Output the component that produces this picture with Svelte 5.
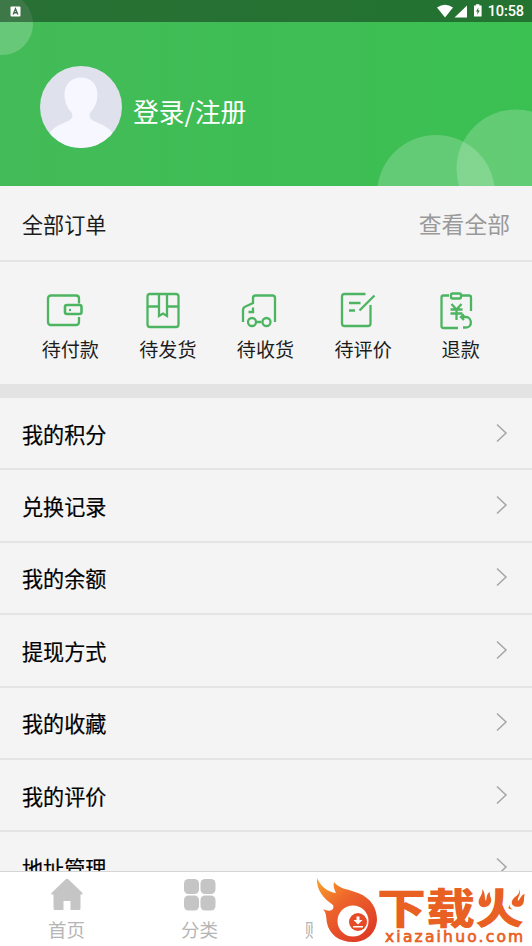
<script>
    const orders = [
        { icon: "wallet", name: "待付款" },
        { icon: "box", name: "待发货" },
        { icon: "truck", name: "待收货" },
        { icon: "review", name: "待评价" },
        { icon: "refund", name: "退款" },
    ]
    const menu = ["我的积分", "兑换记录", "我的余额", "提现方式", "我的收藏", "我的评价", "地址管理"]
    const tabs = [
        { icon: "home", name: "首页" },
        { icon: "grid", name: "分类" },
        { icon: "", name: "购物车" },
        { icon: "", name: "" },
    ]
</script>

<div class="screen">
    <header>
        <svg class="bubbles" viewBox="0 0 532 186">
            <circle cx="2" cy="24" r="31" />
            <circle cx="436" cy="194" r="59" />
            <circle cx="516" cy="169" r="59.5" />
        </svg>
        <div class="status">
            <svg width="11" height="11" viewBox="0 0 11 11">
                <rect x=".5" y=".5" width="10" height="10" rx="1" fill="#fff" />
                <path d="M3.2 8.5 5.5 2.8 7.8 8.5M4.1 6.8H6.9" fill="none" stroke="#426b48" stroke-width="1.4" />
            </svg>
            <div class="signals">
                <svg width="46" height="14" viewBox="0 0 46 14" fill="#fff">
                    <path d="M1 3.6Q9-2 17 3.6L9 13.4Z" />
                    <path d="M31 1.5V13.4H18.5Z" />
                    <path d="M38 1.6H40V.3H43.4V1.6H45.6V12.6H38Z" />
                    <path d="M42.5 3.4 40 7.5H41.6L41 10.8 43.8 6.5H42.1Z" fill="#25702f" />
                </svg>
                <span>10:58</span>
            </div>
        </div>
        <div class="user">
            <svg width="82" height="82" viewBox="0 0 82 82">
                <defs><clipPath id="face"><circle cx="41" cy="41" r="41" /></clipPath></defs>
                <g clip-path="url(#face)">
                    <rect width="82" height="82" fill="#dfe1ed" />
                    <path d="M41 11.5C31 11.5 24.5 18.5 24.5 28.5C24.5 37 28 42.5 32 47C33.5 52 31 54 26 56C18 59 12 62.5 8 69V84H74V69C70 62.5 64 59 56 56C51 54 48.5 52 50 47C54 42.5 57.5 37 57.5 28.5C57.5 18.5 51 11.5 41 11.5Z" fill="#f6f7ff" />
                </g>
            </svg>
            <span>登录/注册</span>
        </div>
    </header>

    <div class="all">
        <span>全部订单</span>
        <span class="more">查看全部</span>
    </div>

    <div class="orders">
        {#each orders as order}
            <div class="order">
                <svg width="40" height="40" viewBox="0 0 40 40">
                    {#if order.icon == "wallet"}
                        <path d="M33 13.5V8.5Q33 5.5 30 5.5H5Q2 5.5 2 8.5V32Q2 35 5 35H30Q33 35 33 32V27" />
                        <rect x="19" y="15" width="16.5" height="9" rx="2" stroke-width="2.6" />
                        <circle cx="24" cy="20" r=".6" stroke-width="1.2" />
                    {:else if order.icon == "box"}
                        <rect x="3.5" y="4" width="31" height="33" rx="2.5" />
                        <path d="M4 16.5H15M23 16.5H34M15 4V26L19 23.5 23 26V4" />
                    {:else if order.icon == "truck"}
                        <path d="M2 32V20Q2 17.5 4.5 16.5L12 13V8Q12 5.5 14.5 5.5H31.5Q34 5.5 34 8V32M12 17.5V22H7.5M15.5 32H20.5" />
                        <circle cx="11" cy="32" r="4" />
                        <circle cx="25.5" cy="32" r="4" />
                    {:else if order.icon == "review"}
                        <path d="M26.5 4H5.5Q3 4 3 6.5V33.5Q3 36 5.5 36H29Q31.5 36 31.5 33.5V15M10 13H21.5M10 20.5H16M20.5 20.5 35.5 5.5" />
                    {:else}
                        <path d="M12 5.5H6.5Q4.5 5.5 4.5 7.5V36Q4.5 38 6.5 38H21M25 5.5H32Q34 5.5 34 7.500V21" />
                        <rect x="14" y="3.5" width="10" height="5" rx="1.5" />
                        <path d="M14.5 14 19.5 19.5 24.5 14M13.5 19.5H25.5M13.5 23.5H25.5M19.5 19.5V30M24 27H29C35 27 36 37.5 29 37.5H26M27 24.5 24 27 27 30" />
                    {/if}
                </svg>
                <span>{order.name}</span>
            </div>
        {/each}
    </div>

    <div class="menu">
        {#each menu as item}
            <div class="row">
                <span>{item}</span>
                <svg width="12" height="20" viewBox="0 0 12 20">
                    <path d="M1 1.5 10 10 1 18.5" fill="none" stroke="#a5a5a5" stroke-width="1.5" />
                </svg>
            </div>
        {/each}
    </div>

    <nav>
        {#each tabs as tab}
            <div class="tab">
                <svg width="34" height="34" viewBox="0 0 34 34">
                    {#if tab.icon == "home"}
                        <path d="M15.5 1.4Q17 .2 18.500 1.4L32.5 15Q33 16.5 31.5 16.5H30.5V30.5Q30.5 32 29 32H20.5V23H13.5V32H5Q3.500 32 3.5 30.5V16.5H2Q.5 16.5 1.5 15Z" />
                    {:else if tab.icon == "grid"}
                        <rect x="1" y="1" width="15" height="15" rx="4.5" />
                        <rect x="17.5" y="1" width="15" height="15" rx="4.5" />
                        <rect x="1" y="17.5" width="15" height="15" rx="4.5" />
                        <rect x="17.5" y="17.5" width="15" height="15" rx="4.5" />
                    {/if}
                </svg>
                <span>{tab.name}</span>
            </div>
        {/each}
    </nav>

    <div class="brand">
        <svg class="flame" width="64" height="67" viewBox="0 0 64 67">
            <defs>
                <linearGradient id="fire" x1="0" y1="0" x2=".7" y2="1">
                    <stop offset="0" stop-color="#f9a32b" />
                    <stop offset=".45" stop-color="#ed632b" />
                    <stop offset="1" stop-color="#df3c25" />
                </linearGradient>
            </defs>
            <path d="M2 0C6 9 13 14 21 15C19 11 18 8 19 4C24 11 33 11 43 15C56 20 62 30 62 42C61 56 51 64 38 64C24 64 14 56 12 45C11 40 12 36 8 31C14 34 20 33 18 27C9 21 1 12 2 0Z" fill="url(#fire)" />
            <circle cx="38" cy="43" r="15.5" fill="#fff" />
            <circle cx="43" cy="44" r="9" fill="#e64b28" />
            <path d="M41.5 38.500H44.5V42H47.5L43 46.5 38.5 42H41.5ZM38 48H48V49.5H38Z" fill="#fff" />
        </svg>
        <div class="words">
            <div class="name">下载火</div>
            <div class="site">xiazaihuo.com</div>
        </div>
        <svg class="sparks" width="52" height="24" viewBox="0 0 52 24">
            <path class="gap" d="M0 0H16.5V18L14 24H0ZM34 0H52V24H39L34 18Z" />
            <path d="M6 0C8 6 1 9 3 15C5 20 13 19 15 13C16 9 13 7 14 3C10 5 11 9 10 12C8 9 10 4 6 0Z" />
            <path d="M43 0C45 6 38 7 36 12C34 18 44 20 47 15C49 11 47 9 49 5C45 6 45 9 42 12C41 8 46 5 43 0Z" />
        </svg>
    </div>
</div>

<style>
    :global(body){
        margin: 0;
        overflow: hidden;
    }

    .screen{
        position: relative;
        display: flex;
        flex-direction: column;
        width: 532px;
        height: 946px;
        overflow: hidden;
        background: #f4f4f4;
        color: #1c1c1c;
        font-family: "Noto Sans CJK SC", sans-serif;
    }

    svg{
        display: block;
        flex-shrink: 0;
    }

    header{
        position: relative;
        height: 186px;
        flex-shrink: 0;
        background: linear-gradient(90deg, #43bb58, #3bc052);
        color: white;
    }

    .bubbles{
        position: absolute;
        inset: 0;
        fill: rgba(255, 255, 255, 0.2);
    }

    .status{
        position: relative;
        display: flex;
        align-items: center;
        justify-content: space-between;
        height: 22px;
        padding: 0 8px 0 10px;
        background: rgba(0, 0, 0, 0.4);
    }

    .signals{
        display: flex;
        align-items: center;
        gap: 6px;
        font: 500 14.5px/20px Roboto, sans-serif;
    }

    .signals span{
        padding-top: 2px;
        letter-spacing: -0.1px;
    }

    .user{
        position: relative;
        display: flex;
        align-items: center;
        gap: 11px;
        padding: 44px 0 0 40px;
        font-size: 25.8px;
    }

    .user span{
        padding-top: 8px;
        line-height: 36px;
    }

    .all{
        display: flex;
        align-items: center;
        justify-content: space-between;
        box-sizing: border-box;
        height: 76px;
        flex-shrink: 0;
        padding: 1px 22px 0;
        border-bottom: 2px solid #e5e5e5;
        font-size: 21.1px;
    }

    .more{
        color: #999;
        font-size: 22.8px;
    }

    .orders{
        display: flex;
        box-sizing: border-box;
        height: 136px;
        flex-shrink: 0;
        padding: 28px 22px 0 21.5px;
        border-bottom: 14px solid #e3e3e3;
    }

    .order{
        display: flex;
        flex-direction: column;
        align-items: center;
        width: 97.6px;
        font-size: 19.1px;
        line-height: 28px;
    }

    .order svg{
        margin: 0 8px 5px 0;
        fill: none;
        stroke: #4db562;
        stroke-width: 2.3;
    }

    .order span{
        white-space: nowrap;
    }

    .menu{
        flex: 1;
        min-height: 0;
        overflow: hidden;
        color: black;
        font-size: 21.1px;
        -webkit-text-stroke: 0.2px black;
    }

    .row{
        display: flex;
        align-items: center;
        justify-content: space-between;
        box-sizing: border-box;
        height: 72.4px;
        padding: 1px 24px 0 22px;
        border-bottom: 2px solid #e4e4e4;
    }

    .row svg{
        margin-bottom: 2px;
    }

    nav{
        display: flex;
        box-sizing: border-box;
        height: 75px;
        flex-shrink: 0;
        padding-top: 6px;
        border-top: 1px solid #d5d5d5;
        background: white;
        color: #b5b5b5;
        font-size: 18.5px;
        line-height: 28px;
    }

    .tab{
        display: flex;
        flex-direction: column;
        align-items: center;
        gap: 3px;
        width: 133px;
        fill: #c5c5c5;
    }

    .brand{
        position: absolute;
        left: 313px;
        bottom: 0;
        display: flex;
        width: 219px;
        height: 74px;
        background: white;
    }

    .flame{
        margin: 6px 0 0 2px;
    }

    .words{
        margin-left: -2px;
        color: #e96023;
    }

    .name{
        height: 44px;
        margin-top: 12px;
        font-size: 49px;
        font-weight: 900;
        line-height: 44px;
        white-space: nowrap;
        transform: scaleY(0.86);
    }

    .site{
        margin-left: 8px;
        font: 15.5px/18px "DejaVu Sans", sans-serif;
        letter-spacing: 2.2px;
        -webkit-text-stroke: 0.7px #e96023;
    }

    .sparks{
        position: absolute;
        right: 4px;
        top: 17px;
        fill: #e96023;
    }

    .sparks .gap{
        fill: white;
    }
</style>
